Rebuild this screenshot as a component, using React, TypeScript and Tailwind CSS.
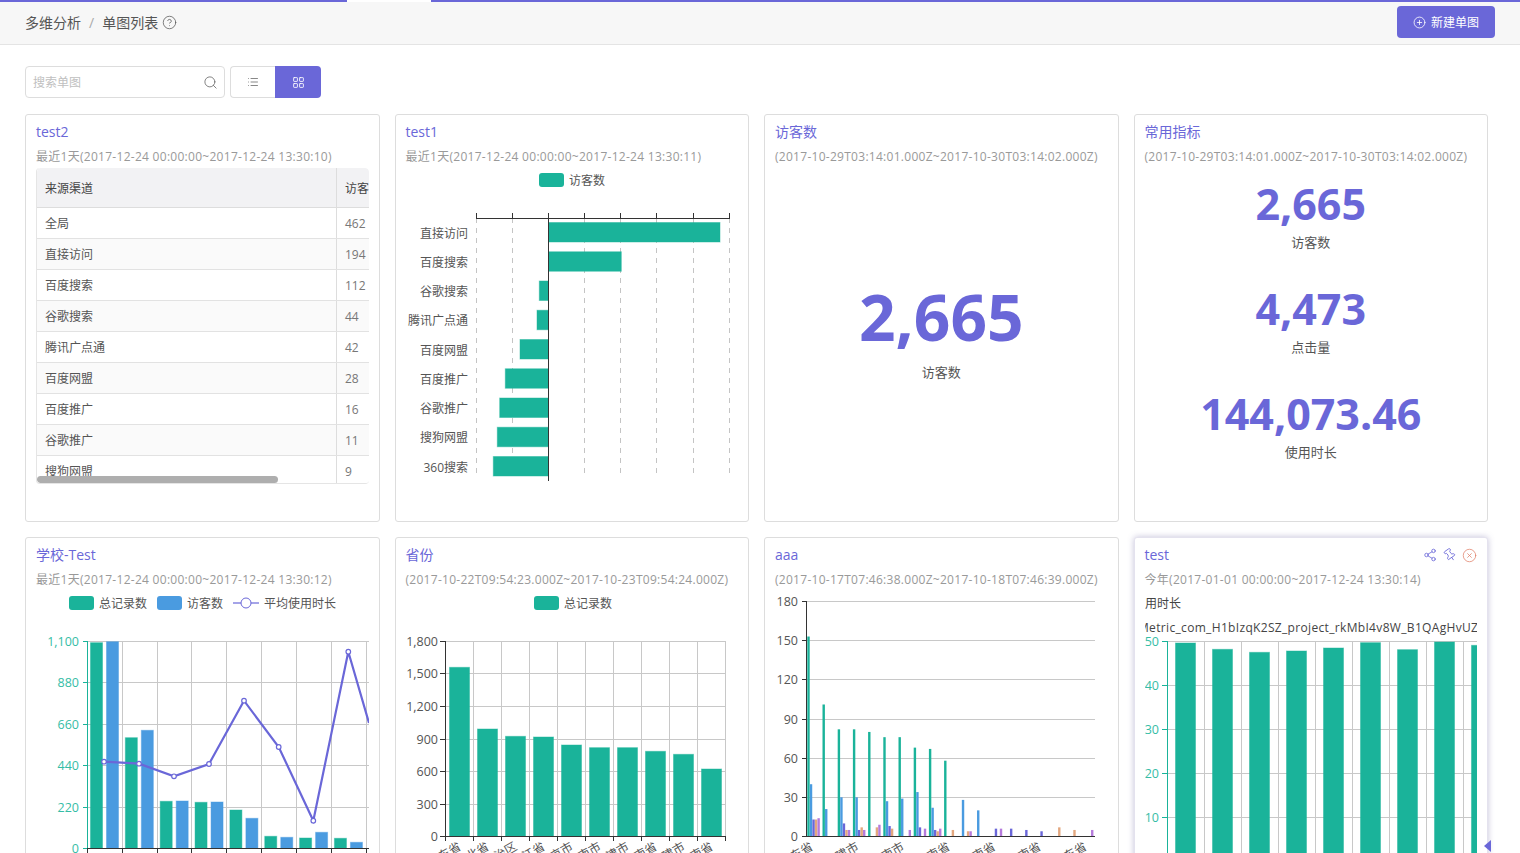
import { ReactNode } from "react";
import { CircleHelp, CirclePlus, CircleX, LayoutGrid, List, Pin, Search, Share2 } from "lucide-react";

const GREEN = "#1ab39a";
const BLUE = "#4a9be0";
const PURPLE = "#6a67d8";
const ORANGE = "#e3a77f";
const VIOLET = "#b57bdc";
const GRID = "#c8c8c8";
const AXIS = "#333333";
const LABEL = "#555555";

const tableRows = [
  ["全局", "462"],
  ["直接访问", "194"],
  ["百度搜索", "112"],
  ["谷歌搜索", "44"],
  ["腾讯广点通", "42"],
  ["百度网盟", "28"],
  ["百度推广", "16"],
  ["谷歌推广", "11"],
  ["搜狗网盟", "9"],
];

function Card({ title, subtitle, active, children }: { title: string; subtitle: string; active?: boolean; children: ReactNode }) {
  return (
    <div
      className={
        "h-[408px] rounded-[3px] border px-[10px] pt-[7px] bg-white overflow-hidden " +
        (active ? "border-[#e4e2ee] shadow-[0_0_6px_rgba(90,80,150,0.35)]" : "border-[#dddddd]")
      }>
      <div className="flex items-center justify-between h-[20px]">
        <div className="text-[14px] leading-[20px] text-[#6a67d8]">{title}</div>
        {active && (
          <div className="flex items-center gap-[5px]">
            <Share2 size={14} strokeWidth={1.4} className="ml-[1px] text-[#6a67d8]" />
            <Pin size={14} strokeWidth={1.4} className="ml-[1px] text-[#6a67d8] rotate-[-35deg]" />
            <CircleX size={15} strokeWidth={1.2} className="text-[#e0806a]" />
          </div>
        )}
      </div>
      <div className="mt-[6px] mb-[2px] text-[12px] leading-[18px] tracking-[0.28px] text-[#999999] whitespace-nowrap">{subtitle}</div>
      {children}
    </div>
  );
}

function Table() {
  return (
    <div className="relative h-[316px] w-full overflow-hidden rounded-[4px] border-l border-b border-[#e5e5e5] text-[12px] text-[#555555]">
      <div className="flex h-[40px] bg-[#f2f2f4] border-b border-[#dddddd] items-center text-[#444444] rounded-t-[4px]">
        <div className="w-[300px] h-full shrink-0 pl-[8px] pt-[2px] flex items-center border-r border-[#dddddd]">来源渠道</div>
        <div className="pl-[8px] pt-[2px] whitespace-nowrap">访客数</div>
      </div>
      {tableRows.map((row, i) => (
        <div key={row[0]} className={"flex h-[31px] items-center border-b border-[#e2e2e2] " + (i % 2 ? "bg-[#fafafa]" : "bg-white")}>
          <div className="w-[300px] h-full shrink-0 pl-[8px] pt-[1px] flex items-center border-r border-[#dddddd]">{row[0]}</div>
          <div className="pl-[8px] pt-[1px] text-[#777777]">{row[1]}</div>
        </div>
      ))}
      <div className="absolute left-0 bottom-0 w-[241px] h-[7px] rounded-[4px] bg-[#aeaeae]" />
    </div>
  );
}

function Bar({ x, y, w, h, color }: { x: number; y: number; w: number; h: number; color: string }) {
  return <rect x={x} y={y} width={w} height={h} fill={color} stroke={color} strokeOpacity={0.45} strokeWidth={1} />;
}

function Legend({ x, y, color, text }: { x: number; y: number; color: string; text: string }) {
  return (
    <g>
      <rect x={x} y={y} width={25} height={14} rx={3} fill={color} />
      <text x={x + 30} y={y + 11.5} fontSize={12} fill={LABEL}>
        {text}
      </text>
    </g>
  );
}

function HorizontalBars() {
  const bars = [
    ["直接访问", 720],
    ["百度搜索", 621.3],
    ["谷歌搜索", 539.3],
    ["腾讯广点通", 537],
    ["百度网盟", 520],
    ["百度推广", 505.3],
    ["谷歌推广", 499.7],
    ["搜狗网盟", 497.3],
    ["360搜索", 493.3],
  ] as const;
  const ticks = [476.5, 512.5, 548.5, 584.5, 620.5, 656.5, 693.5, 729.5];
  return (
    <svg className="block w-[332.5px] h-[340px]" viewBox="406 168 332.5 340">
      <Legend x={539} y={173} color={GREEN} text="访客数" />
      {ticks.map((x) => (
        <g key={x}>
          <line x1={x} x2={x} y1={218} y2={478} stroke="#c4c4c4" strokeDasharray="5 5" />
          <line x1={x} x2={x} y1={213} y2={218} stroke={AXIS} />
        </g>
      ))}
      <line x1={476} x2={730} y1={218.5} y2={218.5} stroke={AXIS} />
      {bars.map(([name, end], i) => {
        const y = 222.5 + i * 29.25;
        return (
          <g key={name}>
            <Bar x={Math.min(end, 548.5)} y={y} w={Math.abs(end - 548.5)} h={19.5} color={GREEN} />
            <text x={468} y={y + 15} fontSize={12} fill={LABEL} textAnchor="end">
              {name}
            </text>
          </g>
        );
      })}
      <line x1={548.5} x2={548.5} y1={218} y2={481} stroke={AXIS} />
    </svg>
  );
}

function SchoolChart() {
  const gridY = [
    [641.5, "1,100"],
    [682.5, "880"],
    [724.5, "660"],
    [765.5, "440"],
    [807.5, "220"],
    [848.5, "0"],
  ] as const;
  const gridX = [87.5, 122.5, 157.5, 191.5, 226.5, 261.5, 296.5, 331.5, 366.5];
  const greens = [642.7, 737.7, 801.3, 802.3, 810, 836.3, 838, 838.3];
  const blues = [641.7, 730.3, 801, 802, 818.3, 837.3, 832.3, 842.3];
  const line = [
    [104, 761.7],
    [139, 763.7],
    [174, 776.3],
    [209, 764],
    [244, 700.7],
    [278.7, 747],
    [313.3, 820.7],
    [348.3, 651.7],
  ];
  return (
    <svg className="block w-[332.5px] h-[263px]" viewBox="36 591 332.5 263">
      <Legend x={69} y={596} color={GREEN} text="总记录数" />
      <Legend x={157} y={596} color={BLUE} text="访客数" />
      <line x1={233} x2={259} y1={603} y2={603} stroke="#a5a4e8" strokeWidth={2} />
      <circle cx={246} cy={603} r={5} fill="white" stroke={PURPLE} />
      <text x={264} y={607.5} fontSize={12} fill={LABEL}>
        平均使用时长
      </text>
      {gridY.map(([y, t]) => (
        <g key={t}>
          <line x1={88} x2={369} y1={y} y2={y} stroke={GRID} />
          <text x={79} y={y + 4.5} fontSize={12.5} fill="#35bda6" textAnchor="end">
            {t}
          </text>
          <line x1={83} x2={88} y1={y} y2={y} stroke={GREEN} />
        </g>
      ))}
      {gridX.map((x) => (
        <g key={x}>
          <line x1={x} x2={x} y1={641} y2={848} stroke={GRID} />
          <line x1={x} x2={x} y1={848} y2={853} stroke={AXIS} />
        </g>
      ))}
      {greens.map((top, i) => (
        <Bar key={i} x={90.5 + i * 34.85} y={top} w={12} h={848 - top} color={GREEN} />
      ))}
      {blues.map((top, i) => (
        <Bar key={i} x={106.5 + i * 34.85} y={top} w={12} h={848 - top} color={BLUE} />
      ))}
      <line x1={88} x2={369} y1={848.5} y2={848.5} stroke={AXIS} />
      <line x1={87.5} x2={87.5} y1={641} y2={848} stroke={GREEN} />
      <polyline
        points={line.map((p) => p.join(",")).join(" ") + " 369,723"}
        fill="none"
        stroke={PURPLE}
        strokeWidth={2.2}
      />
      {line.map((p) => (
        <circle key={p[0]} cx={p[0]} cy={p[1]} r={2.3} fill="white" stroke={PURPLE} strokeWidth={1.2} />
      ))}
    </svg>
  );
}

function ProvinceChart() {
  const gridY = [
    [641.5, "1,800"],
    [673.5, "1,500"],
    [706.5, "1,200"],
    [739.5, "900"],
    [771.5, "600"],
    [804.5, "300"],
    [836.5, "0"],
  ] as const;
  const tops = [232, 417, 439, 441, 465, 473, 473, 484, 493, 537];
  const names = ["广东省", "湖北省", "自治区", "浙江省", "北京市", "河南市", "天津市", "河南省", "福建市", "湖南省"];
  return (
    <svg className="block w-[332.5px] h-[263px]" viewBox="406 591 332.5 263">
      <Legend x={534} y={596} color={GREEN} text="总记录数" />
      {gridY.map(([y, t]) => (
        <g key={t}>
          <line x1={445} x2={726} y1={y} y2={y} stroke={GRID} />
          <line x1={440} x2={445} y1={y} y2={y} stroke={AXIS} />
          <text x={438} y={y + 4.5} fontSize={12.5} fill={LABEL} textAnchor="end">
            {t}
          </text>
        </g>
      ))}
      {Array.from({ length: 11 }).map((_, i) => (
        <g key={i}>
          <line x1={445.5 + i * 28} x2={445.5 + i * 28} y1={641} y2={836} stroke={GRID} />
          <line x1={445.5 + i * 28} x2={445.5 + i * 28} y1={836} y2={841} stroke={AXIS} />
        </g>
      ))}
      {tops.map((t, i) => {
        const y = 590 + t / 3;
        return (
          <g key={i}>
            <Bar x={449.5 + i * 28} y={y} w={20} h={836.5 - y} color={GREEN} />
            <text
              x={462 + i * 28}
              y={849}
              fontSize={12}
              fill={LABEL}
              textAnchor="end"
              transform={`rotate(-30 ${462 + i * 28} 849)`}>
              {names[i]}
            </text>
          </g>
        );
      })}
      <line x1={445} x2={726} y1={836.5} y2={836.5} stroke={AXIS} />
      <line x1={445.5} x2={445.5} y1={641} y2={837} stroke={AXIS} />
    </svg>
  );
}

// [green, blue, dark purple, orange, violet] for each category
const aaaData = [
  [153, 40, 13, 13, 14],
  [101, 21, 0, 0, 0],
  [82, 30, 10, 5, 5],
  [82, 30, 5, 7, 5],
  [80, 0, 0, 7, 9],
  [76, 27, 8, 6, 0],
  [76, 29, 0, 0, 5],
  [68, 34, 7, 0, 6],
  [67, 22, 5, 4, 6],
  [58, 0, 0, 5, 0],
  [0, 28, 0, 4, 4],
  [0, 20, 0, 0, 0],
  [0, 0, 6, 0, 6],
  [0, 0, 6, 0, 0],
  [0, 0, 5, 0, 0],
  [0, 0, 4, 0, 0],
  [0, 0, 0, 7, 0],
  [0, 0, 0, 5, 0],
  [0, 0, 0, 0, 5],
];

function AaaChart() {
  const gridY = [
    [601.5, "180"],
    [640.5, "150"],
    [679.5, "120"],
    [719.5, "90"],
    [758.5, "60"],
    [797.5, "30"],
    [836.5, "0"],
  ] as const;
  const colors = [GREEN, BLUE, PURPLE, ORANGE, VIOLET];
  const names = ["广东省", "福建市", "河南市", "海南省", "湖南省", "海南省", "广东省"];
  return (
    <svg className="block w-[332.5px] h-[263px]" viewBox="775 591 332.5 263">
      {gridY.map(([y, t]) => (
        <g key={t}>
          <line x1={807} x2={1095} y1={y} y2={y} stroke={GRID} />
          <line x1={802} x2={807} y1={y} y2={y} stroke={AXIS} />
          <text x={798} y={y + 4.5} fontSize={12.5} fill={LABEL} textAnchor="end">
            {t}
          </text>
        </g>
      ))}
      {aaaData.map((group, g) =>
        group.map((v, s) =>
          v ? (
            <rect
              key={`${g}-${s}`}
              x={807.3 + g * 15.2 + s * 2.53}
              y={836.5 - v * 1.307}
              width={2.4}
              height={v * 1.307}
              fill={colors[s]}
            />
          ) : null,
        ),
      )}
      <line x1={807} x2={1095} y1={836.5} y2={836.5} stroke={AXIS} />
      <line x1={806.5} x2={806.5} y1={601} y2={837} stroke={AXIS} />
      {names.map((n, i) => {
        const x = 814 + i * 45.6;
        return (
          <text key={i} x={x} y={849} fontSize={12} fill={LABEL} textAnchor="end" transform={`rotate(-30 ${x} 849)`}>
            {n}
          </text>
        );
      })}
    </svg>
  );
}

function TestChart() {
  const gridY = [
    [641.5, "50"],
    [685.5, "40"],
    [729.5, "30"],
    [773.5, "20"],
    [817.5, "10"],
  ] as const;
  const tops = [324, 343, 352, 348, 339, 323, 344, 321, 331];
  return (
    <svg className="block w-[332.5px] h-[263px]" viewBox="1145 591 332.5 263">
      <text x={1133} y={608} fontSize={12} fill="#444444">
        使用时长
      </text>
      <text x={1138} y={632} fontSize={12} letterSpacing={0.33} fill="#444444">
        Metric_com_H1bIzqK2SZ_project_rkMbI4v8W_B1QAgHvUZ
      </text>
      {gridY.map(([y, t]) => (
        <g key={t}>
          <line x1={1167} x2={1478} y1={y} y2={y} stroke={GRID} />
          <line x1={1162} x2={1167} y1={y} y2={y} stroke={GREEN} />
          <text x={1159} y={y + 4.5} fontSize={12.5} fill="#35bda6" textAnchor="end">
            {t}
          </text>
        </g>
      ))}
      {Array.from({ length: 8 }).map((_, i) => (
        <line key={i} x1={1204.5 + i * 37} x2={1204.5 + i * 37} y1={641} y2={854} stroke={GRID} />
      ))}
      {tops.map((t, i) => {
        const y = 535 + t / 3;
        return <Bar key={i} x={1175.5 + i * 37} y={y} w={20} h={860 - y} color={GREEN} />;
      })}
      <line x1={1167.5} x2={1167.5} y1={641} y2={854} stroke={GREEN} />
    </svg>
  );
}

export default function App() {
  return (
    <div className="relative h-[853px] overflow-hidden bg-white font-['Open_Sans','Noto_Sans_CJK_SC',sans-serif]">
      <div className="flex h-[2px]">
        <div className="w-[347px] bg-[#6a67d8]" />
        <div className="w-[84px] bg-white" />
        <div className="flex-1 bg-[#6a67d8]" />
      </div>

      {/* Header */}
      <div className="flex items-center justify-between h-[43px] pl-[25px] pr-[25px] bg-[#f7f7f7] border-b border-[#e4e4e4]">
        <div className="flex items-center pb-[2px] text-[14px] text-[#555555]">
          <span>多维分析</span>
          <span className="mx-[8px] text-[#aaaaaa]">/</span>
          <span>单图列表</span>
          <CircleHelp size={15} strokeWidth={1.2} className="ml-[4px]" />
        </div>
        <button className="flex items-center justify-center gap-[5px] w-[98px] h-[32px] mb-[2px] pt-[1px] rounded-[4px] bg-[#6a67d8] text-[12px] text-white">
          <CirclePlus size={13} strokeWidth={1.5} />
          新建单图
        </button>
      </div>

      {/* Toolbar */}
      <div className="flex items-center mt-[21px] ml-[25px] h-[32px]">
        <div className="flex items-center justify-between w-[200px] h-full pl-[7px] pr-[6px] rounded-[4px] border border-[#dddddd]">
          <span className="pt-[1px] text-[12px] text-[#c0c0c0]">搜索单图</span>
          <Search size={15} strokeWidth={1.3} className="text-[#666666]" />
        </div>
        <div className="flex h-full ml-[5px]">
          <div className="flex items-center justify-center w-[45px] rounded-l-[4px] border border-r-0 border-[#dddddd]">
            <List size={12} strokeWidth={1.4} className="text-[#555555]" />
          </div>
          <div className="flex items-center justify-center w-[46px] rounded-r-[4px] bg-[#6a67d8]">
            <LayoutGrid size={13} strokeWidth={1.6} className="text-white" />
          </div>
        </div>
      </div>

      {/* Cards */}
      <div className="grid grid-cols-4 gap-[15px] mt-[16px] ml-[25px] w-[1463px]">
        <Card title="test2" subtitle="最近1天(2017-12-24 00:00:00~2017-12-24 13:30:10)">
          <Table />
        </Card>
        <Card title="test1" subtitle="最近1天(2017-12-24 00:00:00~2017-12-24 13:30:11)">
          <HorizontalBars />
        </Card>
        <Card title="访客数" subtitle="(2017-10-29T03:14:01.000Z~2017-10-30T03:14:02.000Z)">
          <div className="flex flex-col items-center">
            <div className="mt-[114px] text-[64px] leading-[70px] font-bold text-[#6a67d8]">2,665</div>
            <div className="mt-[11px] text-[13px] leading-[18px] text-[#555555]">访客数</div>
          </div>
        </Card>
        <Card title="常用指标" subtitle="(2017-10-29T03:14:01.000Z~2017-10-30T03:14:02.000Z)">
          <div className="flex flex-col items-center mt-[13px]">
            {[
              ["2,665", "访客数"],
              ["4,473", "点击量"],
              ["144,073.46", "使用时长"],
            ].map(([num, name]) => (
              <div key={name} className="flex flex-col items-center mb-[33px]">
                <div className="text-[43px] leading-[50px] font-bold text-[#6a67d8]">{num}</div>
                <div className="mt-[4px] text-[13px] leading-[18px] text-[#555555]">{name}</div>
              </div>
            ))}
          </div>
        </Card>

        <Card title="学校-Test" subtitle="最近1天(2017-12-24 00:00:00~2017-12-24 13:30:12)">
          <SchoolChart />
        </Card>
        <Card title="省份" subtitle="(2017-10-22T09:54:23.000Z~2017-10-23T09:54:24.000Z)">
          <ProvinceChart />
        </Card>
        <Card title="aaa" subtitle="(2017-10-17T07:46:38.000Z~2017-10-18T07:46:39.000Z)">
          <AaaChart />
        </Card>
        <Card active title="test" subtitle="今年(2017-01-01 00:00:00~2017-12-24 13:30:14)">
          <TestChart />
        </Card>
      </div>

      {/* collapsed side panel handle */}
      <div className="absolute left-[1484px] top-[840px] w-0 h-0 border-y-[6px] border-y-transparent border-r-[7px] border-r-[#6a67d8]" />
    </div>
  );
}
